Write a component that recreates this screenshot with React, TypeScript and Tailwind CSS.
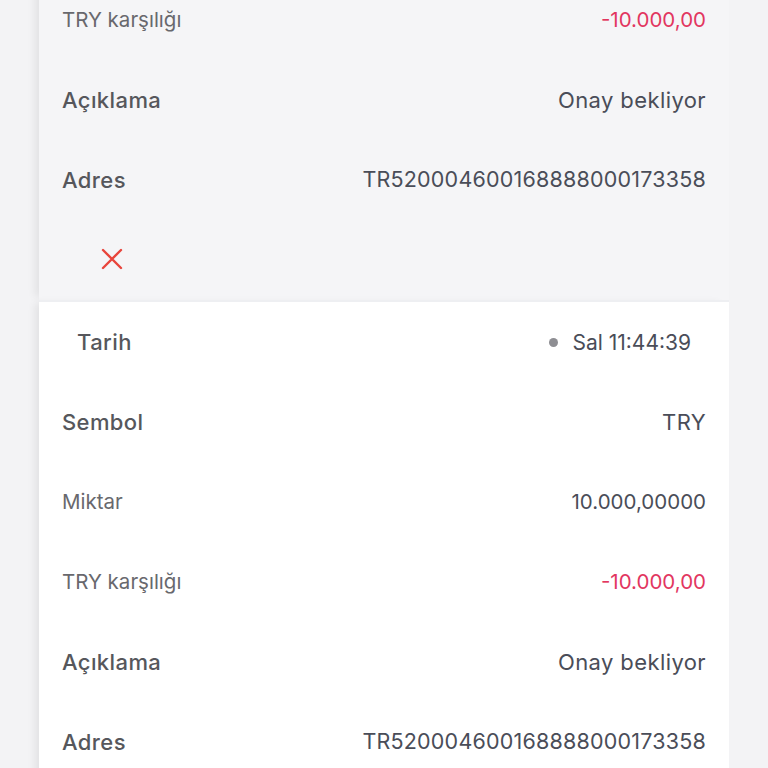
import React from "react";

const font = { fontFamily: "Inter, 'Noto Sans', sans-serif" } as React.CSSProperties;

type Row = { label: string; value: string; strong?: boolean; red?: boolean; kind?: "text" | "addr" | "num" };

const rowsTop: Row[] = [
  { label: "TRY karşılığı", value: "-10.000,00", red: true, kind: "num" },
  { label: "Açıklama", value: "Onay bekliyor", strong: true, kind: "text" },
  { label: "Adres", value: "TR520004600168888000173358", strong: true, kind: "addr" },
];

const rowsBottom: Row[] = [
  { label: "Sembol", value: "TRY", strong: true, kind: "text" },
  { label: "Miktar", value: "10.000,00000", kind: "num" },
  { label: "TRY karşılığı", value: "-10.000,00", red: true, kind: "num" },
  { label: "Açıklama", value: "Onay bekliyor", strong: true, kind: "text" },
  { label: "Adres", value: "TR520004600168888000173358", strong: true, kind: "addr" },
];

function valueClass(r: Row) {
  const color = r.red ? "text-[#e2365f]" : "text-[#4a4d58]";
  if (r.kind === "text") return `${color} text-[22px] tracking-[0.4px]`;
  if (r.kind === "addr") return `${color} text-[21.5px] tracking-[0.2px]`;
  return `${color} text-[20.5px]`;
}

function DetailRow({ r }: { r: Row }) {
  return (
    <div className="flex h-[80px] items-center justify-between px-[23px] text-[21px] leading-none">
      <span
        className={
          r.strong
            ? "text-[22px] font-medium tracking-[0.4px] text-[#56575c]"
            : "text-[20.5px] font-normal text-[#68686d]"
        }
      >
        {r.label}
      </span>
      <span className={valueClass(r)}>{r.value}</span>
    </div>
  );
}

export default function App() {
  return (
    <div
      className="h-[768px] w-[768px] overflow-hidden bg-[#f3f3f5] px-[39px]"
      style={font}
    >
      <div className="-mt-[20px] bg-[#f5f5f7] shadow-[-7px_0_8px_-3px_rgba(0,0,0,0.07)]">
        {rowsTop.map((r, i) => (
          <DetailRow key={i} r={r} />
        ))}
        <div className="flex h-[80px] items-center px-[62px]">
          <svg width="24" height="24" viewBox="0 0 24 24" className="-ml-[1px] -mt-[2px]">
            <path
              d="M3 3 L21 21 M21 3 L3 21"
              stroke="#e8453c"
              strokeWidth="2.4"
              strokeLinecap="round"
              fill="none"
            />
          </svg>
        </div>
      </div>
      <div className="border-t-2 border-[#eeeff2] bg-white shadow-[-7px_0_8px_-3px_rgba(0,0,0,0.07)]">
        <div className="flex h-[80px] items-center justify-between px-[38px] leading-none">
          <span className="text-[22px] font-medium tracking-[0.4px] text-[#56575c]">Tarih</span>
          <span className="flex items-center gap-[14px] text-[21px] text-[#4a4d58]">
            <span className="h-[9px] w-[9px] rounded-full bg-[#8e8e93]" />
            Sal 11:44:39
          </span>
        </div>
        {rowsBottom.map((r, i) => (
          <DetailRow key={i} r={r} />
        ))}
      </div>
    </div>
  );
}
